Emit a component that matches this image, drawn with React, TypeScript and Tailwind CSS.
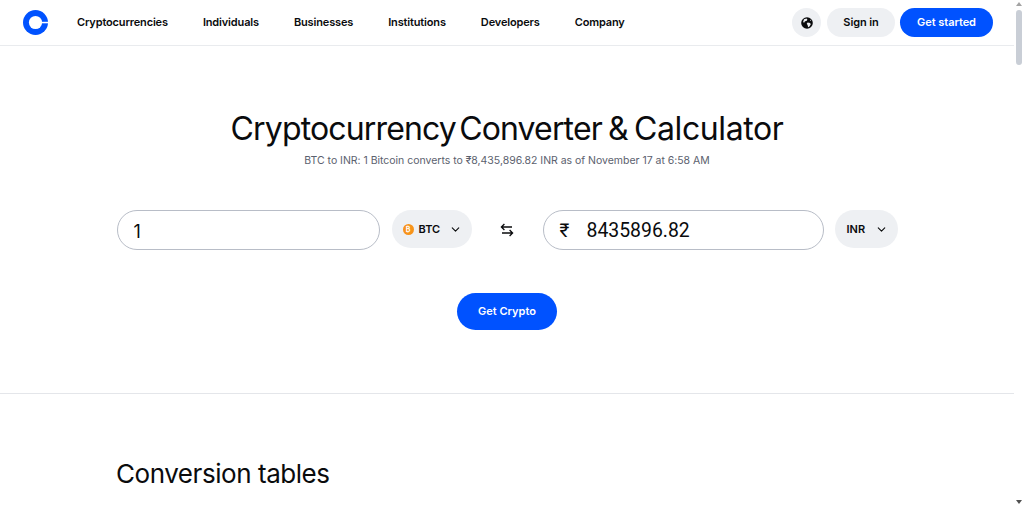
import { ChevronDown } from "lucide-react";

const nav = ["Cryptocurrencies", "Individuals", "Businesses", "Institutions", "Developers", "Company"];

function Logo() {
  return (
    <svg width="25" height="25" viewBox="0 0 25 25" className="shrink-0">
      <circle cx="12.5" cy="12.5" r="12.5" fill="#0052ff" />
      <circle cx="12.5" cy="12.5" r="6.6" fill="#ffffff" />
      <rect x="17" y="11.8" width="8" height="1.5" fill="#ffffff" />
    </svg>
  );
}

function Globe() {
  return (
    <svg width="12" height="12" viewBox="0 0 12 12">
      <circle cx="6" cy="6" r="5.8" fill="#0a0b0d" />
      <path fill="#eef0f3" d="M3 2.2 5.6 1.4l.8 1.3-1 1.3-1.5.2-.5 1.3L2 5.2ZM6.6 5.4l2.6.5.5 1.5-1.3 2.2-1.3.6-.5-2.2-.9-1.2ZM9 2.4l1.2 1.3-.9.3Z" />
    </svg>
  );
}

function Swap() {
  return (
    <svg width="14" height="14" viewBox="0 0 14 14" fill="none" stroke="#0a0b0d" strokeWidth="1.3">
      <path d="M12 4H1.6M4.4 1 1.4 4l3 3" />
      <path d="M2 10h10.4M9.6 7l3 3-3 3" />
    </svg>
  );
}

export default function App() {
  return (
    <div className="flex h-[508px] w-[1024px] overflow-hidden bg-white font-['Inter',sans-serif] text-[#0a0b0d]">
      <div className="flex w-[1014px] flex-col">
        <header className="flex h-[46px] shrink-0 items-center border-b border-[#e9ebee] pl-[23px] pr-[21px]">
          <Logo />
          <nav className="ml-[29px] flex gap-[35px] text-[11px] font-semibold tracking-[-0.15px]">
            {nav.map((n) => (
              <span key={n}>{n}</span>
            ))}
          </nav>
          <div className="ml-auto flex items-center">
            <span className="flex h-[29px] w-[29px] items-center justify-center rounded-full bg-[#eef0f3]">
              <Globe />
            </span>
            <span className="ml-[6px] flex h-[29px] w-[68px] items-center justify-center rounded-full bg-[#eef0f3] text-[11px] font-semibold tracking-[-0.1px]">
              Sign in
            </span>
            <span className="ml-[5px] flex h-[29px] w-[93px] items-center justify-center rounded-full bg-[#0052ff] text-[11px] font-semibold tracking-[-0.05px] text-white">
              Get started
            </span>
          </div>
        </header>

        <section className="flex h-[348px] shrink-0 flex-col items-center border-b border-[#e4e6ea]">
          <h1 className="mt-[62px] text-[32px] font-normal leading-[42px] tracking-[-0.85px] [word-spacing:-2px]">
            <span className="[word-spacing:-5px]">Cryptocurrency Converter</span> &amp;{" "}
            <span className="tracking-[-0.4px]">Calculator</span>
          </h1>
          <p className="mt-[3px] text-[10.5px] leading-[16px] tracking-[-0.02px] text-[#5b616e]">
            BTC to INR: 1 Bitcoin converts to ₹8,435,896.82 INR as of November 17 at 6:58 AM
          </p>

          <div className="mt-[41px] flex items-start">
            <div className="flex h-[40px] w-[263px] items-center rounded-full border border-[#b8bdc7] pl-[16px] pt-[2px] text-[18px]">
              1
            </div>
            <div className="ml-[12px] flex h-[38px] w-[80px] items-center rounded-full bg-[#eef0f3] pl-[11px] text-[11px] font-semibold">
              <span className="flex h-[11px] w-[11px] items-center justify-center rounded-full bg-[#f7931a] text-[7px] font-bold leading-none text-white">
                ₿
              </span>
              <span className="ml-[5px]">BTC</span>
              <ChevronDown size={13} strokeWidth={2} className="ml-[9px]" />
            </div>
            <div className="flex h-[40px] w-[71px] items-center justify-center">
              <Swap />
            </div>
            <div className="flex h-[40px] w-[281px] items-center rounded-full border border-[#b8bdc7] pl-[16px] pt-px font-['Roboto',sans-serif] text-[19.4px]">
              <span className="w-[27px] text-[19px] leading-none">₹</span>
              <span>8435896.82</span>
            </div>
            <div className="ml-[11px] flex h-[38px] w-[63px] items-center rounded-full bg-[#eef0f3] pl-[12px] text-[11px] font-semibold">
              <span>INR</span>
              <ChevronDown size={13} strokeWidth={2} className="ml-[10px]" />
            </div>
          </div>

          <button className="mt-[43px] flex h-[37px] w-[100px] items-center justify-center rounded-full bg-[#0052ff] text-[11px] font-semibold text-white">
            Get Crypto
          </button>
        </section>

        <h2 className="ml-[116px] mt-[62px] text-[26px] font-normal leading-[36px] tracking-[-0.45px]">
          Conversion tables
        </h2>
      </div>

      <div className="flex w-[10px] flex-col items-center pt-[2px]">
        <span className="h-0 w-0 border-x-[3px] border-b-[4px] border-x-transparent border-b-[#a3a3a3]" />
        <span className="mt-[4px] h-[55px] w-[6px] rounded-full bg-[#c9ced6]" />
        <span className="mt-auto mb-[4px] h-0 w-0 border-x-[3px] border-t-[4px] border-x-transparent border-t-[#505050]" />
      </div>
    </div>
  );
}
